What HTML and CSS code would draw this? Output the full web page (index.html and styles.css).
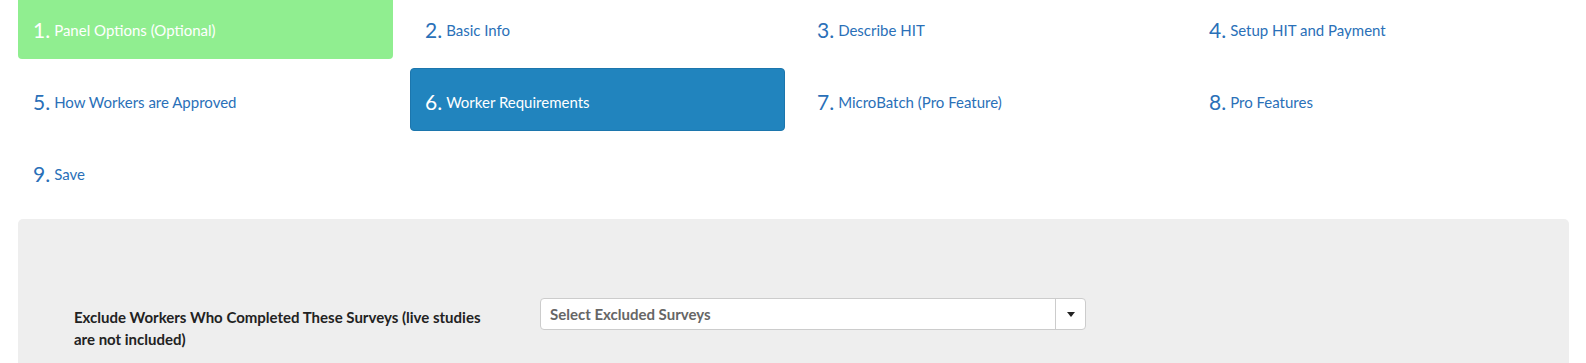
FILE: index.html
```html
<!DOCTYPE html>
<html>
<head>
<meta charset="utf-8">
<link rel="stylesheet" href="styles.css">
</head>
<body>
<div class="page">
  <ul class="steps">
    <li><a class="step done"><span class="num">1.</span><span class="lbl">Panel Options (Optional)</span></a></li>
    <li><a class="step"><span class="num">2.</span><span class="lbl">Basic Info</span></a></li>
    <li><a class="step"><span class="num">3.</span><span class="lbl">Describe HIT</span></a></li>
    <li><a class="step"><span class="num">4.</span><span class="lbl">Setup HIT and Payment</span></a></li>
    <li><a class="step"><span class="num">5.</span><span class="lbl">How Workers are Approved</span></a></li>
    <li><a class="step active"><span class="num">6.</span><span class="lbl">Worker Requirements</span></a></li>
    <li><a class="step"><span class="num">7.</span><span class="lbl">MicroBatch (Pro Feature)</span></a></li>
    <li><a class="step"><span class="num">8.</span><span class="lbl">Pro Features</span></a></li>
    <li><a class="step"><span class="num">9.</span><span class="lbl">Save</span></a></li>
  </ul>
  <div class="panel">
    <div class="form-row">
      <label class="field-label">Exclude Workers Who Completed These Surveys (live studies are not included)</label>
      <div class="select">
        <span class="select-text">Select Excluded Surveys</span>
        <span class="select-btn"><span class="caret"></span></span>
      </div>
    </div>
  </div>
</div>
</body>
</html>
```
FILE: styles.css
```css
html, body {
  margin: 0;
  padding: 0;
  background: #fff;
  overflow: hidden;
}
body {
  font-family: "Lato", "Open Sans", "Liberation Sans", sans-serif;
  color: #333;
}
.page {
  padding: 0 17px 0 18px;
}
.steps {
  list-style: none;
  margin: -4px 0 0 0;
  padding: 0;
  display: grid;
  grid-template-columns: repeat(4, 1fr);
  column-gap: 17px;
  row-gap: 9px;
}
.step {
  display: flex;
  align-items: center;
  height: 63px;
  box-sizing: border-box;
  padding: 4px 15px 0 15px;
  border-radius: 4px;
  color: #2a70b8;
  text-decoration: none;
}
.step .num {
  font-size: 21px;
  margin-right: 4px;
}
.step .lbl {
  font-size: 15px;
}
.step.done {
  background: #90ee90;
  color: #fff;
}
.step.active {
  background: #2184be;
  border: 1px solid #1c76ad;
  color: #fff;
  padding-left: 14px;
}
.panel {
  margin-top: 16px;
  background: #eee;
  border-radius: 5px 5px 0 0;
  box-sizing: border-box;
  height: 144px;
  padding: 79px 0 0 56px;
}
.form-row {
  display: grid;
  grid-template-columns: 425px 546px;
  column-gap: 41px;
  align-items: start;
}
.field-label {
  padding-top: 8px;
  font-weight: bold;
  font-size: 15px;
  line-height: 22px;
  color: #222;
}
.select {
  display: flex;
  height: 32px;
  box-sizing: border-box;
  border: 1px solid #ccc;
  border-radius: 4px;
  background: #fff;
}
.select-text {
  flex: 1;
  display: flex;
  align-items: center;
  padding-left: 9px;
  font-size: 15px;
  font-weight: bold;
  color: #666;
}
.select-btn {
  width: 29px;
  border-left: 1px solid #ccc;
  display: flex;
  align-items: center;
  justify-content: center;
}
.caret {
  width: 0;
  height: 0;
  border-left: 4px solid transparent;
  border-right: 4px solid transparent;
  border-top: 5px solid #222;
}
```
